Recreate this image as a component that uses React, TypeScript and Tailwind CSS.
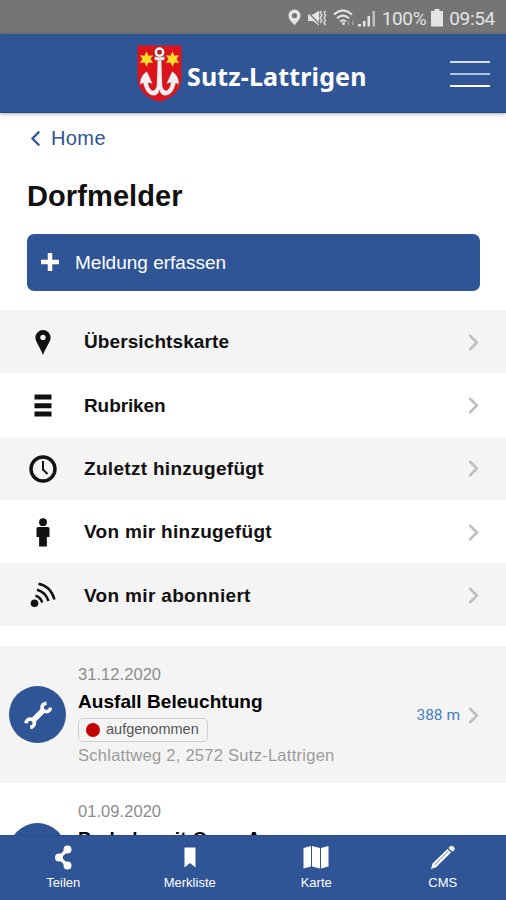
import type { ReactNode } from "react";
import { ChevronLeft, ChevronRight } from "lucide-react";

type MenuEntry = {
  label: string;
  spacing: string;
  icon: ReactNode;
};

const PinIcon = () => (
  <svg width="16" height="25" viewBox="0 0 16 25" fill="#111">
    <path
      fillRule="evenodd"
      d="M8 0a7.6 7.6 0 0 1 7.6 7.6C15.6 12 11 17 8 25 5 17 .4 12 .4 7.6A7.6 7.6 0 0 1 8 0Zm0 4.700a2.700 2.700 0 1 0 0 5.400 2.700 2.700 0 0 0 0-5.400Z"
    />
  </svg>
);

const BarsIcon = () => (
  <svg width="18" height="23" viewBox="0 0 18 23" fill="#111">
    <path d="M.5.5h17v5H.5zM.5 9.200h17v5H.5zM.5 17.500h17v5H.5z" />
  </svg>
);

const ClockIcon = () => (
  <svg width="28" height="28" viewBox="0 0 28 28" fill="none" stroke="#111">
    <circle cx="14" cy="14" r="12" strokeWidth="3.400" />
    <path d="M14 6v8.500l4.500 4.500" strokeWidth="2" />
  </svg>
);

const PersonIcon = () => (
  <svg width="14" height="29" viewBox="0 0 14 29" fill="#111">
    <circle cx="7" cy="4.200" r="3.900" />
    <path d="M2.200 9h9.600q1.700 0 1.700 1.700V19h-2.600v9.500H3.100V19H.5v-8.300Q.5 9 2.200 9Z" />
  </svg>
);

const FeedIcon = () => (
  <svg width="26" height="26" viewBox="0 0 26 26" fill="none" stroke="#111" strokeWidth="2.500">
    <circle cx="4.500" cy="21.300" r="3.800" fill="#111" stroke="none" />
    <path d="M5.500 13.700Q10.500 15 12.300 20.500M7 7.700Q15.500 10 18.500 19M8.500 1.800Q20.500 4 24.500 17.500" />
  </svg>
);

const menu: MenuEntry[] = [
  { label: "Übersichtskarte", spacing: "tracking-[0.1px]", icon: <PinIcon /> },
  { label: "Rubriken", spacing: "-tracking-[0.1px]", icon: <BarsIcon /> },
  { label: "Zuletzt hinzugefügt", spacing: "tracking-[0.3px]", icon: <ClockIcon /> },
  { label: "Von mir hinzugefügt", spacing: "tracking-[0.3px]", icon: <PersonIcon /> },
  { label: "Von mir abonniert", spacing: "tracking-[0.33px]", icon: <FeedIcon /> },
];

function StatusBar() {
  return (
    <div className="flex h-[34px] shrink-0 items-center justify-end bg-[#757575] pt-[2px] pr-[11px] text-[#e4e4e4]">
      <svg width="13" height="18" viewBox="0 0 13 18" fill="currentColor">
        <path
          fillRule="evenodd"
          d="M6.500.5a6 6 0 0 1 6 6c0 4-4 7-6 10-2-3-6-6-6-10a6 6 0 0 1 6-6Zm0 3.500a2.600 2.600 0 1 0 0 5.200 2.600 2.600 0 0 0 0-5.200Z"
        />
      </svg>
      <svg className="ml-[6px]" width="20" height="18" viewBox="0 0 20 18" fill="currentColor">
        <path d="M1 5.500h5l6-4v15l-6-4.500H1z" />
        <path d="M0 2.500l13 13" stroke="#757575" strokeWidth="1.200" />
        <path
          d="M14.500 2l-1.500 2 2 2.500-2 2.500 2 2.500-2 2.500M18.500 2L17 4l1.500 2.500L17 9l1.500 2.500L17 14l1.500 2"
          fill="none"
          stroke="currentColor"
          strokeWidth="1.300"
        />
      </svg>
      <svg className="ml-[6px]" width="23" height="18" viewBox="0 0 23 18" fill="none" stroke="currentColor" strokeWidth="2">
        <path d="M1 5.500Q10-2.500 19 5.500M4 9.200Q10 4 16 9.200M7 12.500Q10 10 13 12.500" />
        <circle cx="10.500" cy="14.500" r="1.500" fill="currentColor" stroke="none" />
        <path d="M15.500 11.500v5M20 11.500v5" strokeWidth="1.500" opacity=".4" />
      </svg>
      <svg className="ml-[2px]" width="18" height="17" viewBox="0 0 18 17" fill="currentColor">
        <path d="M0 14h3v2.500H0zM5 11h2.500v5.500H5zM9.500 6H12v10.500H9.500z" />
        <path d="M14.500 1H17v15.500h-2.500z" opacity=".65" />
      </svg>
      <span className="ml-[6px] font-['Roboto',sans-serif] text-[19px] leading-none tracking-[-0.4px]">100%</span>
      <svg className="ml-[5px]" width="12" height="18" viewBox="0 0 12 18" fill="currentColor">
        <path d="M3.500 0h5v2H12v15.500H0V2h3.500z" />
      </svg>
      <span className="ml-[6px] font-['Roboto',sans-serif] text-[19px] leading-none tracking-[-0.3px]">09:54</span>
    </div>
  );
}

// Municipal coat of arms: anchor and two stars on red
function Crest() {
  return (
    <svg width="45" height="57" viewBox="0 0 45 57">
      <path d="M.5.5h44v32C44.500 46 34 54 22.500 56.500 11 54 .5 46 .5 32.500Z" fill="#de121a" />
      <g fill="#ffdc2a">
        <path d="M9.500 6.500l2 4.200 4.700-.4-2.700 3.800 2.700 3.800-4.700-.4-2 4.200-2-4.200-4.700.4 2.700-3.800-2.700-3.800 4.700.4z" />
        <path d="M35.500 6.500l2 4.200 4.700-.4-2.700 3.800 2.700 3.800-4.700-.4-2 4.200-2-4.200-4.700.4 2.700-3.800-2.700-3.800 4.700.4z" />
      </g>
      <circle cx="22.500" cy="7.200" r="3.700" fill="none" stroke="#7d2a2e" strokeWidth="3.600" />
      <circle cx="22.500" cy="7.200" r="3.700" fill="none" stroke="#f4f2f2" strokeWidth="2.500" />
      <g fill="#f1efef" stroke="#8a5658" strokeWidth=".4" strokeLinejoin="round">
        <path d="M10 26.500C6 28.500 3 33 3 39.500l3.200-1.500C7.500 45 12 51 17 50.500c3 0 5-2.500 5.500-5.500.5 3 2.500 5.500 5.500 5.500 5 .5 9.500-5.500 10.800-12.500l3.200 1.500C42 33 39 28.500 35 26.500l-5.500 12 4.500-.8c-.8 4.500-3 8-5 7.800-2.500-.2-3.500-3-3.800-6L24.500 15h-4l-.7 24.500c-.3 3-1.300 5.800-3.800 6-2 .2-4.200-3.300-5-7.800l4.500.8Z" />
        <path d="M17.500 11.500q5 1.500 10 0v3.500q-5 1-10 0Z" />
      </g>
    </svg>
  );
}

function Header() {
  return (
    <header className="z-10 flex h-[79px] shrink-0 items-center border-b border-[#234681] bg-[#2f5597] pl-[137px] pr-[16px] text-white shadow-[0_1px_4px_rgba(0,0,0,0.35)]">
      <Crest />
      <span className="ml-[5px] mt-[6px] font-['Noto_Sans',sans-serif] text-[25px] leading-none font-bold tracking-[0.15px] whitespace-nowrap">
        Sutz-Lattrigen
      </span>
      <div className="ml-auto mt-[2px] flex w-[40px] flex-col gap-[10px]">
        <span className="h-[2px] bg-[#d5ddeb]" />
        <span className="h-[2px] bg-[#b4c1d8]" />
        <span className="h-[2px] bg-white" />
      </div>
    </header>
  );
}

const Chevron = () => <ChevronRight className="-mr-[9px] mt-px text-[#bebebe]" size={27} strokeWidth={2.2} />;

function WrenchBadge() {
  return (
    <div className="flex h-[57px] w-[57px] shrink-0 items-center justify-center rounded-full bg-[#2f5597]">
      <svg className="mt-[2px]" width="28" height="29" viewBox="0 0 28 29" fill="none" stroke="#fff">
        <path d="M8 20.500 20 8.500" strokeWidth="5.500" />
        <path d="M22.500 2.200q-4.500.8-4.500 4.300.5 4 4.500 4.200 3.300-.2 4.300-4" strokeWidth="3.500" />
        <path d="M1.800 22.200q.7-4 4.700-4.300 4 .8 4 4.300-.3 3.500-4.200 4.400" strokeWidth="3.500" />
      </svg>
    </div>
  );
}

export default function App() {
  return (
    <div className="relative flex h-[900px] w-[506px] flex-col overflow-hidden bg-white font-['Liberation_Sans',Arial,sans-serif] text-[#111]">
      <StatusBar />
      <Header />

      <main className="min-h-0 flex-1 overflow-hidden">
        <div className="h-[197px] px-[27px] pt-[13px]">
          <a className="flex h-[24px] items-center text-[20px] leading-none tracking-[0.4px] text-[#2f5597]">
            <ChevronLeft className="-ml-[4px] mr-[3px]" size={25} strokeWidth={2.3} />
            Home
          </a>
          <h1 className="mt-[30px] text-[29px] leading-[32px] font-bold tracking-[0.1px]">Dorfmelder</h1>
          <button className="mt-[22px] flex h-[57px] w-[453px] items-center rounded-[7px] bg-[#2f5597] pl-[14px] text-[19px] text-white">
            <svg className="-mt-px" width="18" height="18" viewBox="0 0 18 18" stroke="#fff" strokeWidth="4.500">
              <path d="M9 0v18M0 9h18" />
            </svg>
            <span className="ml-[16px] mt-[2px]">Meldung erfassen</span>
          </button>
        </div>

        <ul>
          {menu.map((entry) => (
            <li key={entry.label} className="flex h-[63.3px] items-center pr-[28px] odd:bg-[#f4f4f4]">
              <span className="flex w-[84px] justify-center pt-px pl-[2px]">{entry.icon}</span>
              <span className={`flex-1 pt-[2px] text-[19px] font-bold ${entry.spacing}`}>{entry.label}</span>
              <Chevron />
            </li>
          ))}
        </ul>

        <section className="mt-[20px]">
          <article className="flex h-[137px] items-center bg-[#f4f4f4] pl-[9px] pr-[28px]">
            <WrenchBadge />
            <div className="ml-[12px] flex-1">
              <p className="text-[16.5px] leading-[20px] tracking-[0.05px] text-[#8d8d8d]">31.12.2020</p>
              <h2 className="mt-[5px] text-[19px] leading-[26px] font-bold tracking-[0.05px] text-black">Ausfall Beleuchtung</h2>
              <span className="mt-[3px] flex h-[24px] w-[130px] items-center rounded-[5px] border border-[#cfcfcf] pl-[7px] text-[14.5px] text-[#555]">
                <i className="mr-[6px] h-[14px] w-[14px] rounded-full bg-[#c40000]" />
                aufgenommen
              </span>
              <p className="mt-[3px] mb-px text-[16.5px] leading-[20px] tracking-[0.27px] whitespace-nowrap text-[#9b9b9b]">
                Schlattweg 2, 2572 Sutz-Lattrigen
              </p>
            </div>
            <span className="pt-px font-['Roboto',sans-serif] text-[15.5px] text-[#3f7fc4]">388 m</span>
            <Chevron />
          </article>
          <article className="flex h-[137px] items-center pl-[9px] pr-[28px]">
            <WrenchBadge />
            <div className="ml-[12px] flex-1">
              <p className="text-[16.5px] leading-[20px] tracking-[0.05px] text-[#8d8d8d]">01.09.2020</p>
              <h2 className="mt-[5px] text-[19px] leading-[26px] font-bold tracking-[0.3px] text-black">Parkuhr mit Open App</h2>
              <span className="mt-[3px] block h-[24px]" />
              <p className="mt-[4px] h-[20px]" />
            </div>
          </article>
        </section>
      </main>

      <footer className="grid h-[65px] shrink-0 grid-cols-4 border-t border-[#234b8e] bg-[#2f5597] text-[13px] leading-[16px] text-white">
        <div className="flex flex-col items-center pt-[9px]">
          <svg width="18" height="25" viewBox="0 0 18 25" fill="#fff">
            <path d="M13.500 4.500 5 12.500l8.500 8" fill="none" stroke="#fff" strokeWidth="3.200" />
            <circle cx="13.500" cy="4.500" r="4" />
            <circle cx="5" cy="12.500" r="4" />
            <circle cx="13.500" cy="20.500" r="4" />
          </svg>
          <span className="mt-[5px]">Teilen</span>
        </div>
        <div className="flex flex-col items-center pt-[9px]">
          <svg width="12" height="25" viewBox="0 0 12 25" fill="#fff">
            <path d="M.5 2.500h11v20L6 18 .5 22.500z" />
          </svg>
          <span className="mt-[5px]">Merkliste</span>
        </div>
        <div className="flex flex-col items-center pt-[9px]">
          <svg width="26" height="25" viewBox="0 0 26 25" fill="#fff">
            <path d="M.5 3 8 1v20.500l-7.500 2zM9 1l8 2v20.500l-8-2zM18 3l7.500-2v20.500l-7.500 2z" />
          </svg>
          <span className="mt-[5px]">Karte</span>
        </div>
        <div className="flex flex-col items-center pt-[9px]">
          <svg width="26" height="25" viewBox="0 0 26 25">
            <path d="M1 24l1.500-5.500L17.500 4l3.500 3.500L6 22.200zM18.500 3l1.500-1.700q1.800-1.300 3.700.5t.5 3.700L22 6.500z" fill="#fff" />
            <path d="M4.500 20 18.500 6" stroke="#2f5597" strokeWidth=".8" />
          </svg>
          <span className="mt-[5px]">CMS</span>
        </div>
      </footer>
    </div>
  );
}
